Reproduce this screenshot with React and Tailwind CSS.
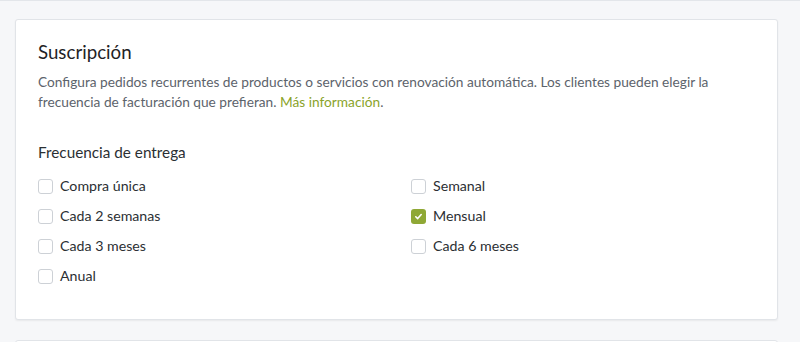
import React from "react";

function Box({ checked }) {
  if (checked) {
    return (
      <span className="flex h-[15px] w-[15px] shrink-0 items-center justify-center rounded-[3px] bg-[#8fa835]">
        <svg width="9" height="9" viewBox="0 0 10 10" fill="none">
          <path d="M2 5.3 L4.1 7.3 L8 2.8" stroke="white" strokeWidth="1.8" strokeLinecap="round" strokeLinejoin="round" />
        </svg>
      </span>
    );
  }
  return <span className="h-[15px] w-[15px] shrink-0 rounded-[3px] border border-[#cdd1d6] bg-white" />;
}

function Item({ label, checked }) {
  return (
    <label className="flex h-[30px] items-center gap-[7px] text-[14.2px] text-[#2b2f33]">
      <Box checked={checked} />
      <span>{label}</span>
    </label>
  );
}

export default function App() {
  const left = [
    ["Compra única", false],
    ["Cada 2 semanas", false],
    ["Cada 3 meses", false],
    ["Anual", false],
  ];
  const right = [
    ["Semanal", false],
    ["Mensual", true],
    ["Cada 6 meses", false],
  ];
  return (
    <div className="h-[342px] w-[800px] overflow-hidden border-t border-[#e3e6ea] bg-[#f6f7f9] pt-[18px] pl-[15px] pr-[22px]" style={{ fontFamily: '"Lato", "Open Sans", sans-serif' }}>
      <div className="h-[301px] rounded-[3px] border border-[#e1e4e8] bg-white px-[22px] pt-[20px] shadow-[0_1px_2px_rgba(0,0,0,0.06)]">
        <h2 className="text-[18.7px] leading-[24px] text-[#1f2326]">Suscripción</h2>
        <p className="mt-[8px] text-[13.7px] leading-[20px] text-[#5c636b]">
          Configura pedidos recurrentes de productos o servicios con renovación automática. Los clientes pueden elegir la frecuencia de facturación que prefieran. <span className="text-[#8aa32a]">Más información</span>.
        </p>
        <h3 className="mt-[30px] text-[15.3px] leading-[20px] text-[#2b2f33]">Frecuencia de entrega</h3>
        <div className="mt-[9px] grid grid-cols-[373px_1fr]">
          <div className="flex flex-col">
            {left.map(([l, c]) => <Item key={l} label={l} checked={c} />)}
          </div>
          <div className="flex flex-col">
            {right.map(([l, c]) => <Item key={l} label={l} checked={c} />)}
          </div>
        </div>
      </div>
      <div className="mt-[20px] h-[20px] rounded-[3px] border border-[#e1e4e8] bg-white" />
    </div>
  );
}
